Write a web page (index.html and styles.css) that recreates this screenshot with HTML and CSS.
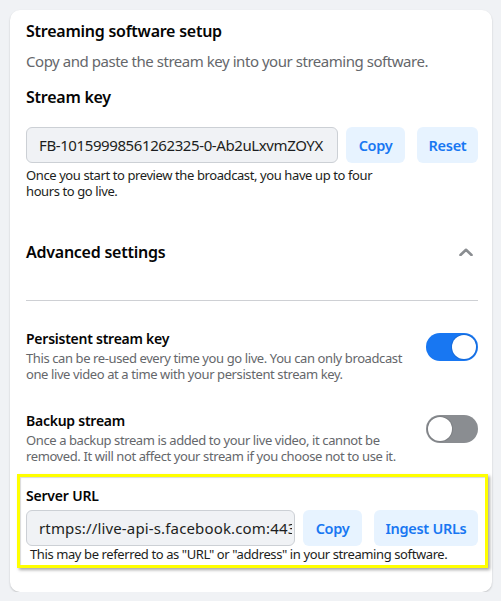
FILE: index.html
```html
<!DOCTYPE html>
<html lang="en">
<head>
<meta charset="utf-8">
<title>Streaming software setup</title>
<link rel="stylesheet" href="styles.css">
</head>
<body>
<div class="card">
  <h2 class="title">Streaming software setup</h2>
  <p class="subtitle">Copy and paste the stream key into your streaming software.</p>
  <h3 class="key-heading">Stream key</h3>
  <div class="field-row">
    <input class="field" type="text" readonly value="FB-10159998561262325-0-Ab2uLxvmZOYX">
    <button class="btn btn-copy">Copy</button>
    <button class="btn btn-reset">Reset</button>
  </div>
  <p class="helper key-helper">Once you start to preview the broadcast, you have up to four hours to go live.</p>

  <div class="adv-row">
    <h3 class="adv-title">Advanced settings</h3>
    <svg class="chevron" width="14" height="8" viewBox="0 0 14 8"><polyline points="1.5,7 7,1.8 12.5,7" fill="none" stroke="#8a8d91" stroke-width="2.6" stroke-linejoin="round" stroke-linecap="round"/></svg>
  </div>
  <hr class="divider">

  <div class="setting setting-first">
    <div class="setting-text">
      <div class="setting-title">Persistent stream key</div>
      <div class="setting-desc">This can be re-used every time you go live. You can only broadcast one live video at a time with your persistent stream key.</div>
    </div>
    <div class="toggle toggle-on"><span class="knob"></span></div>
  </div>

  <div class="setting setting-second">
    <div class="setting-text">
      <div class="setting-title">Backup stream</div>
      <div class="setting-desc">Once a backup stream is added to your live video, it cannot be removed. It will not affect your stream if you choose not to use it.</div>
    </div>
    <div class="toggle toggle-off"><span class="knob"></span></div>
  </div>

  <div class="highlight">
    <div class="server-title">Server URL</div>
    <div class="field-row server-row">
      <input class="field server-field" type="text" readonly value="rtmps://live-api-s.facebook.com:443/rtmp/">
      <button class="btn btn-copy">Copy</button>
      <button class="btn btn-ingest">Ingest URLs</button>
    </div>
    <p class="helper server-helper">This may be referred to as "URL" or "address" in your streaming software.</p>
  </div>
</div>
</body>
</html>
```

FILE: styles.css
```css
* { box-sizing: border-box; }

html, body {
  margin: 0;
  background: #f0f2f5;
}

body {
  padding: 10px 0 0 10px;
  font-family: "Noto Sans", "Open Sans", sans-serif;
  color: #1c1e21;
}

.card {
  width: 482px;
  height: 582px;
  background: #ffffff;
  border-radius: 10px;
  box-shadow: 0 1px 2px rgba(0, 0, 0, 0.2);
  padding: 10px 14px 0 16px;
}

.title {
  margin: 0;
  font-size: 16px;
  line-height: 22px;
  font-weight: 600;
  letter-spacing: -0.25px;
  color: #050505;
}

.subtitle {
  margin: 9px 0 0;
  font-size: 15px;
  line-height: 20px;
  letter-spacing: -0.46px;
  color: #65676b;
}

.key-heading {
  margin: 15px 0 0;
  font-size: 16px;
  line-height: 22px;
  font-weight: 600;
  letter-spacing: -0.25px;
  color: #050505;
}

.field-row {
  display: flex;
  align-items: center;
  margin-top: 19px;
}

.field {
  flex: 1;
  min-width: 0;
  height: 36px;
  padding: 0 12px;
  border: 1px solid #ccd0d5;
  border-radius: 6px;
  background: #f0f2f5;
  font-family: inherit;
  font-size: 15px;
  letter-spacing: -0.4px;
  color: #1c1e21;
  outline: none;
}

.server-field {
  letter-spacing: 0.15px;
  padding-right: 2px;
}

.btn {
  height: 36px;
  border: none;
  border-radius: 6px;
  background: #e7f3ff;
  color: #1877f2;
  font-family: inherit;
  font-size: 14.5px;
  font-weight: 600;
  letter-spacing: -0.3px;
  padding: 0;
  flex: none;
  text-align: center;
}

.btn-copy { margin-left: 8px; width: 59px; }
.btn-reset { margin-left: 12px; width: 61px; }
.btn-ingest { margin-left: 12px; width: 104px; }

.helper {
  margin: 4px 0 0;
  font-size: 13px;
  line-height: 16px;
  letter-spacing: -0.4px;
  color: #1c1e21;
}

.key-helper {
  max-width: 380px;
}

.adv-row {
  display: flex;
  align-items: center;
  justify-content: space-between;
  margin-top: 42px;
}

.adv-title {
  margin: 0;
  font-size: 16px;
  line-height: 22px;
  font-weight: 600;
  letter-spacing: -0.25px;
  color: #050505;
}

.chevron {
  margin-right: 5px;
  display: block;
}

.divider {
  margin: 37px 0 0;
  border: none;
  border-top: 1px solid #ced0d4;
}

.setting {
  display: flex;
  align-items: flex-start;
  justify-content: space-between;
}

.setting-first { margin-top: 28px; }
.setting-second { margin-top: 29px; }

.setting-text {
  flex: 1;
  padding-right: 10px;
}

.setting-title {
  font-size: 14px;
  line-height: 20px;
  font-weight: 600;
  letter-spacing: -0.25px;
  color: #050505;
}

.setting-desc {
  margin-top: 1px;
  font-size: 13px;
  line-height: 16px;
  letter-spacing: -0.4px;
  color: #65676b;
}

.toggle {
  flex: none;
  width: 52px;
  height: 28px;
  margin-top: 4px;
  border-radius: 14px;
  padding: 2px;
  display: flex;
}

.toggle-on {
  background: #1877f2;
  justify-content: flex-end;
}

.toggle-off {
  background: #8a8d91;
  justify-content: flex-start;
}

.knob {
  width: 24px;
  height: 24px;
  border-radius: 50%;
  background: #ffffff;
  box-shadow: 0 0 0 1px rgba(0, 0, 0, 0.1);
}

.highlight {
  margin: 10px -10px 0 -9px;
  border: 3px solid #ffff00;
  box-shadow: 2px 2px 3px rgba(0, 0, 0, 0.35), inset 1px 1px 1px rgba(0, 0, 0, 0.15);
  padding: 9px 7px 3px 6px;
}

.server-title {
  font-size: 14px;
  line-height: 20px;
  font-weight: 600;
  letter-spacing: -0.2px;
  color: #050505;
}

.server-row {
  margin-top: 4px;
}

.server-helper {
  margin-top: 0;
  padding-left: 4px;
}
```
